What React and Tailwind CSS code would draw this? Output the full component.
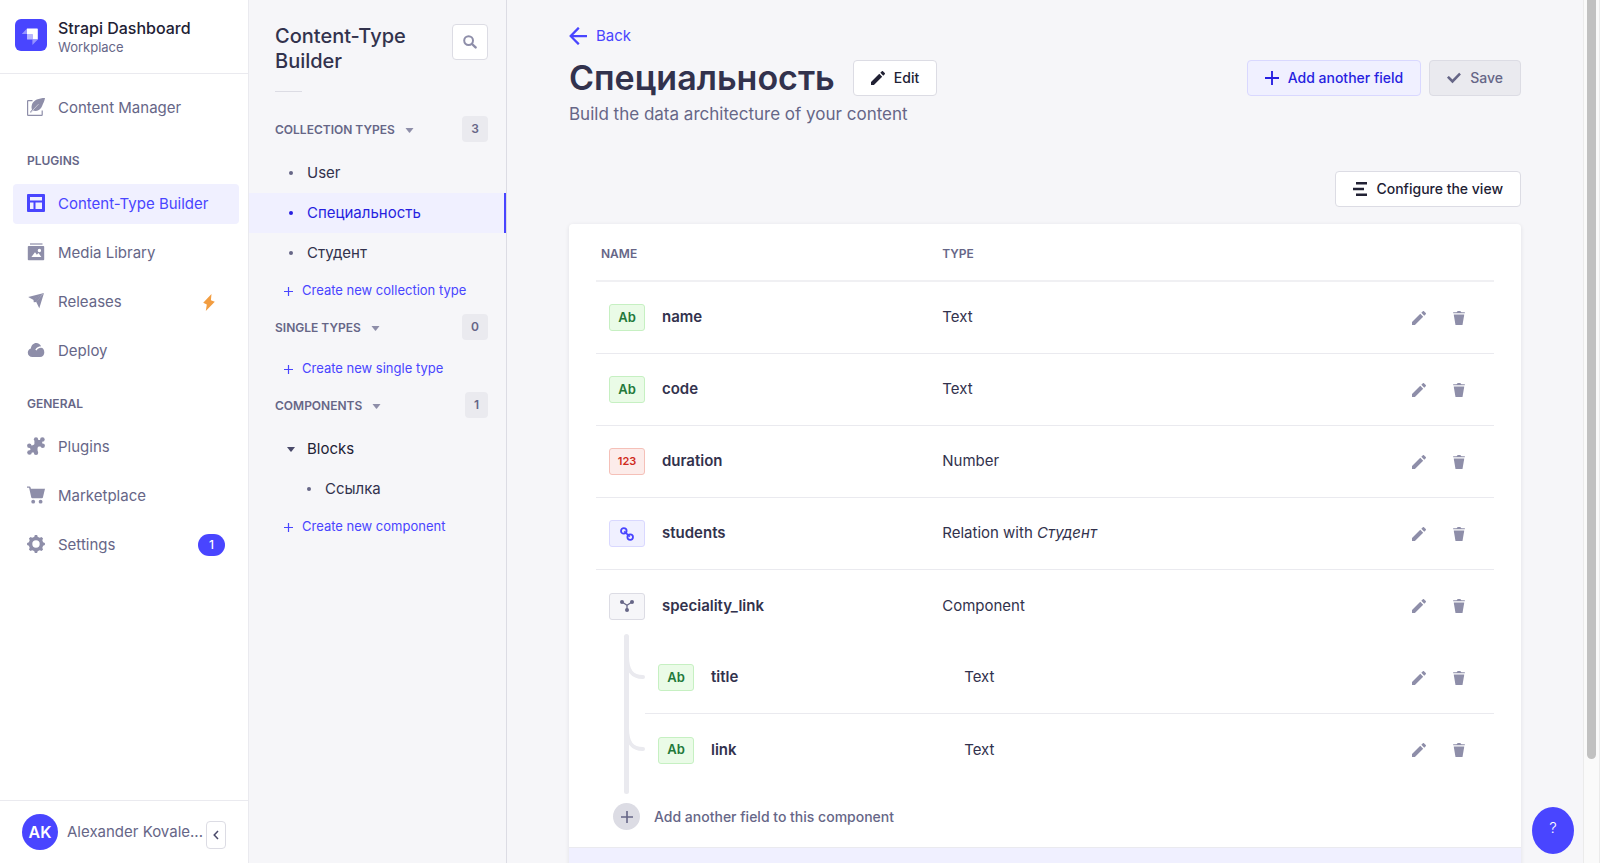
import React, { useState } from 'react';
import clsx from 'clsx';

const Icon = ({ className, viewBox = '0 0 24 24', children }) => (
    <svg className={clsx('shrink-0', className)} viewBox={viewBox} fill="currentColor" aria-hidden="true">
        {children}
    </svg>
);

const Plus = ({ className }) => (
    <Icon className={className}>
        <path d="M24 13.6H13.600V24h-3.200V13.600H0v-3.200h10.400V0h3.200v10.400H24z" />
    </Icon>
);

const Pencil = ({ className }) => (
    <Icon className={className}>
        <path d="M23.604 3.514c.528.528.528 1.36 0 1.887l-2.622 2.607-4.99-4.99L18.6.396a1.322 1.322 0 0 1 1.887 0l3.118 3.118ZM0 24v-4.99l14.2-14.2 4.99 4.99L4.99 24H0Z" />
    </Icon>
);

const Trash = ({ className }) => (
    <Icon className={className}>
        <path d="M3.236 6.149a.2.2 0 0 0-.197.233L6 24h12l2.96-17.618a.2.2 0 0 0-.196-.233H3.236ZM21.8 1.983c.11 0 .2.09.2.2v1.584a.2.2 0 0 1-.2.2H2.2a.2.2 0 0 1-.2-.2V2.183c0-.11.09-.2.2-.2h5.511c.9 0 1.631-1.09 1.631-1.983h5.316c0 .894.73 1.983 1.631 1.983H21.8Z" />
    </Icon>
);

const Check = ({ className }) => (
    <Icon className={className}>
        <path d="M20.727 2.97a.2.2 0 0 1 .286 0l2.85 2.89a.2.2 0 0 1 0 .28L9.554 20.854a.2.2 0 0 1-.285 0l-9.13-9.243a.2.2 0 0 1 0-.281l2.85-2.892a.2.2 0 0 1 .284 0l6.14 6.209L20.726 2.97Z" />
    </Icon>
);

const ArrowLeft = ({ className }) => (
    <Icon className={className}>
        <path d="M24 13.3a.2.2 0 0 1-.2.2H5.74l8.239 8.239a.2.2 0 0 1 0 .282L12.14 23.86a.2.2 0 0 1-.282 0L.14 12.14a.2.2 0 0 1 0-.282L11.86.14a.2.2 0 0 1 .282 0L13.98 1.98a.2.2 0 0 1 0 .282L5.74 10.5H23.8c.11 0 .2.09.2.2v2.6Z" />
    </Icon>
);

const Caret = ({ className }) => (
    <Icon className={className} viewBox="0 0 8 5">
        <path d="M0 0h8L4.5 4.6a.7.7 0 0 1-1 0z" />
    </Icon>
);

const Feather = ({ className }) => (
    <Icon className={className} viewBox="0 0 18 18">
        <path d="M5.5 2.6H1.2a.6.6 0 0 0-.6.6v13.6c0 .3.3.6.6.6h13.4c.3 0 .6-.3.6-.6v-4.2" fill="none" stroke="currentColor" strokeWidth="1.2" />
        <path d="M18 .1C12 .2 6.400 2 4.900 6.800c-.6 1.900-.4 3.600.1 4.800l-2 2.500.9.700 2.100-2.200c1.500.5 4 .6 5.800-.5 1.600-1 2.600-2.400 3.300-4.100 1.300-2.800 2.500-5.200 2.900-7.900z" />
        <path d="M4.300 13.800L11.500 6.200" fill="none" stroke="#fff" strokeWidth=".5" />
    </Icon>
);

const Layout = ({ className }) => (
    <Icon className={className} viewBox="0 0 18 18">
        <path fillRule="evenodd" d="M1 0h16a1 1 0 0 1 1 1v16a1 1 0 0 1-1 1H1a1 1 0 0 1-1-1V1a1 1 0 0 1 1-1zm2 3v3.500h12V3zm0 5.500V15h3.500V8.500zm5.500 0V15H15V8.500z" />
    </Icon>
);

const Media = ({ className }) => (
    <Icon className={className} viewBox="0 0 18 18">
        <path d="M3 .4h12.500v1.200H3z" />
        <path fillRule="evenodd" d="M1.600 3h14.800c.4 0 .8.4.8.800v12.700c0 .4-.4.800-.8.800H1.600a.8.8 0 0 1-.8-.8V3.800c0-.4.400-.8.800-.8zM4.400 14h10l-3-4-1.500 1.800L8 9.200zm8-8.200a1.700 1.700 0 1 0 0 3.400 1.700 1.700 0 0 0 0-3.400z" />
    </Icon>
);

const PaperPlane = ({ className }) => (
    <Icon className={className} viewBox="0 0 18 18">
        <path d="M17 1L1.200 4.900l5.400 3zM17 1l-4.700 15.200-3.200-6.400z" />
        <path d="M16.800 1L6.400 7.500l.4 2.800 2.500-.3z" />
    </Icon>
);

const Cloud = ({ className }) => (
    <Icon className={className} viewBox="0 0 18 18">
        <path d="M5.400 16C2.800 16 .8 14.200.8 11.700c0-2.200 1.300-3.900 3.100-4.300C4.300 4.300 6.500 2 9.200 2c2.300 0 4.100 1.300 4.900 3.300-2.600 0-4.800 1.400-5.800 3.500l1.300.7c.9-1.700 2.500-2.700 4.400-2.700 1.900 0 3.300 2 3.300 4.600 0 2.600-1.700 4.600-4.300 4.600z" />
    </Icon>
);

const Puzzle = ({ className }) => (
    <Icon className={className} viewBox="0 0 18 18">
        <path d="M3 8.500c1.800 0 4-.2 4.300-1.200.4-1-.3-3 .5-4.300L15 3l.5 6.200c-1.400.8-3.300-.3-4.500.8-1.100 1.100.2 3.600-.8 5.500H3l-.5-1.800c1.300-.6 1.300-2.400 0-3z" />
        <circle cx="9" cy="2.300" r="2.100" />
        <circle cx="15.400" cy="2.500" r="2.300" />
        <circle cx="15.700" cy="8.800" r="2.200" />
        <circle cx="9" cy="15.700" r="2.200" />
        <circle cx="2.500" cy="15.500" r="2.300" />
        <circle cx="2.300" cy="8.800" r="2.200" />
    </Icon>
);

const Cart = ({ className }) => (
    <Icon className={className} viewBox="0 0 18 18">
        <path d="M0 .4h2.600c.4 0 .7.2.8.600l.5 1.800h14.100l-2.100 8.700c-.1.500-.5.700-.9.700H5.300c-.5 0-.9-.3-1-.8L2.100 1.700H0z" />
        <circle cx="6.200" cy="15.700" r="1.900" />
        <circle cx="13.600" cy="15.700" r="1.900" />
    </Icon>
);

const Gear = ({ className }) => (
    <Icon className={className} viewBox="0 0 18 18">
        <circle cx="9" cy="9" r="5.500" fill="none" stroke="currentColor" strokeWidth="3.600" />
        {[0, 45, 90, 135, 180, 225, 270, 315].map(a => (
            <path key={a} d="M6.800 3L7.900.1h2.200L11.200 3z" transform={`rotate(${a} 9 9)`} />
        ))}
    </Icon>
);

const Bolt = ({ className }) => (
    <Icon className={className} viewBox="0 0 12 17">
        <path d="M8.500 0L.2 8.800l3.600 1.600L2.800 17l9-9.200-3.900-1.500z" />
    </Icon>
);

const Search = ({ className }) => (
    <Icon className={className} viewBox="0 0 14 14">
        <circle cx="5.600" cy="5.600" r="4.400" fill="none" stroke="currentColor" strokeWidth="2" />
        <path d="M9 9l3.600 3.400" stroke="currentColor" strokeWidth="2.400" strokeLinecap="round" />
    </Icon>
);

const Bars = ({ className }) => (
    <Icon className={className} viewBox="0 0 14 14">
        <path d="M3 0h11v2.600H3zM0 5.700h11v2.600H0zM3 11.400h11V14H3z" />
    </Icon>
);

const Chain = ({ className }) => (
    <Icon className={className} viewBox="0 0 14 14">
        <g fill="none" stroke="currentColor" strokeWidth="1.800">
            <circle cx="3.800" cy="3.900" r="2.800" />
            <circle cx="10.200" cy="10.100" r="2.800" />
            <path d="M4.200 4.400l5.600 5.200" />
        </g>
    </Icon>
);

const Fork = ({ className }) => (
    <Icon className={className} viewBox="0 0 14 12">
        <path d="M2 2l5 3.200L12 2M7 5v5" fill="none" stroke="currentColor" strokeWidth="1.300" />
        <circle cx="2" cy="2" r="2" />
        <circle cx="12" cy="2" r="2" />
        <circle cx="7" cy="10" r="2" />
    </Icon>
);

const StrapiLogo = () => (
    <svg className="size-8 shrink-0" viewBox="0 0 32 32" aria-hidden="true">
        <rect width="32" height="32" rx="6" fill="#4945ff" />
        <path d="M12 9.500h10.200a.6.6 0 0 1 .6.600v10.300h-5.400v-4.900a.5.500 0 0 0-.5-.5H12z" fill="#fff" />
        <path d="M12 9.500V15H6.800zM17.400 20.400h5.400L17.400 26z" fill="#9593ff" />
        <path d="M12 15h4.900c.3 0 .5.200.5.500v4.900h-4.900a.5.500 0 0 1-.5-.5z" fill="#b6b5ff" />
    </svg>
);

const pluginLinks = [
    { label: 'Content-Type Builder', icon: Layout, active: true },
    { label: 'Media Library', icon: Media },
    { label: 'Releases', icon: PaperPlane, bolt: true },
    { label: 'Deploy', icon: Cloud },
];

const generalLinks = [
    { label: 'Plugins', icon: Puzzle },
    { label: 'Marketplace', icon: Cart },
    { label: 'Settings', icon: Gear, count: 1 },
];

const fields = [
    { name: 'name', kind: 'text', type: 'Text' },
    { name: 'code', kind: 'text', type: 'Text' },
    { name: 'duration', kind: 'number', type: 'Number' },
    { name: 'students', kind: 'relation', type: 'Relation with', target: 'Студент' },
    {
        name: 'speciality_link',
        kind: 'component',
        type: 'Component',
        children: [
            { name: 'title', kind: 'text', type: 'Text' },
            { name: 'link', kind: 'text', type: 'Text' },
        ],
    },
];

function NavLink({ item }) {
    const ItemIcon = item.icon;
    return (
        <a
            href="#"
            className={clsx(
                'flex h-10 items-center gap-[13px] rounded px-3.5 text-[15px]',
                item.active ? 'bg-[#f0f0ff] text-[#4945ff]' : 'text-[#666687]'
            )}
        >
            <ItemIcon className={clsx('mb-0.5 size-[18px]', !item.active && 'text-[#8e8ea9]')} />
            <span className="grow">{item.label}</span>
            {item.bolt && <Bolt className="mr-2.5 h-[17px] w-3 text-[#f29d41]" />}
            {item.count && (
                <span className="flex h-[22px] w-[27px] items-center justify-center rounded-full bg-[#4945ff] text-xs font-medium text-white">
                    {item.count}
                </span>
            )}
        </a>
    );
}

function MainNav() {
    return (
        <nav className="flex w-[249px] shrink-0 flex-col border-r border-[#eaeaef] bg-white">
            <div className="flex h-[74px] items-center gap-[11px] border-b border-[#eaeaef] px-[15px] pb-1">
                <StrapiLogo />
                <div className="pt-1">
                    <div className="text-base leading-5 font-medium text-[#212134]">Strapi Dashboard</div>
                    <div className="text-[13px] leading-[18px] text-[#666687]">Workplace</div>
                </div>
            </div>
            <div className="grow pt-3.5 pr-[9px] pl-[13px]">
                <NavLink item={{ label: 'Content Manager', icon: Feather }} />
                <h2 className="mt-6 mb-3.5 px-3.5 text-xs leading-[18px] font-semibold text-[#666687]">PLUGINS</h2>
                <div className="flex flex-col gap-[9px]">
                    {pluginLinks.map(item => <NavLink key={item.label} item={item} />)}
                </div>
                <h2 className="mt-6 mb-3.5 px-3.5 text-xs leading-[18px] font-semibold text-[#666687]">GENERAL</h2>
                <div className="flex flex-col gap-[9px]">
                    {generalLinks.map(item => <NavLink key={item.label} item={item} />)}
                </div>
            </div>
            <div className="flex h-[63px] items-center border-t border-[#eaeaef] pr-[22px] pl-[22px]">
                <span className="flex size-9 shrink-0 items-center justify-center rounded-full bg-[#4945ff] text-base font-semibold text-white">
                    AK
                </span>
                <span className="ml-[9px] grow text-[15px] whitespace-nowrap text-[#666687]">Alexander Kovale...</span>
                <button
                    aria-label="Collapse the navbar"
                    className="mt-1.5 flex h-7 w-5 shrink-0 items-center justify-center rounded border border-[#dcdce4] bg-white text-[#4a4a6a]"
                >
                    <Icon className="h-2.5 w-1.5" viewBox="0 0 6 10">
                        <path d="M5 1L1.200 5 5 9" fill="none" stroke="currentColor" strokeWidth="1.500" />
                    </Icon>
                </button>
            </div>
        </nav>
    );
}

function GroupHeader({ title, count }) {
    return (
        <div className="flex h-[26px] items-center pr-[18px] pl-[26px]">
            <button className="flex items-center gap-2.5 pt-0.5 text-xs font-semibold text-[#666687]">
                {title}
                <Caret className="h-[5px] w-[9px] text-[#8e8ea9]" />
            </button>
            <span className="ml-auto flex h-[26px] items-center rounded bg-[#eaeaef] px-[9px] text-xs font-semibold text-[#666687]">
                {count}
            </span>
        </div>
    );
}

function TypeLink({ label, active, nested }) {
    return (
        <a
            href="#"
            className={clsx(
                'flex h-10 items-center gap-3.5 text-[15px]',
                nested ? 'pl-[58px]' : 'pl-10',
                active ? 'border-r-2 border-[#4945ff] bg-[#f0f0ff] text-[#271fe0]' : 'text-[#32324d]'
            )}
        >
            <span className={clsx('size-1 rounded-full', active ? 'bg-[#271fe0]' : 'bg-[#666687]')}></span>
            {label}
        </a>
    );
}

function CreateButton({ label }) {
    return (
        <button className="ml-[35px] flex h-9 items-center gap-[9px] text-[13px] text-[#4945ff]">
            <Plus className="size-[9px]" />
            {label}
        </button>
    );
}

function SubNav() {
    return (
        <aside className="w-[258px] shrink-0 border-r border-[#dcdce4]">
            <div className="flex items-start justify-between pt-6 pr-[18px] pl-[26px]">
                <h2 className="w-36 text-xl leading-[25px] font-medium text-[#32324d]">Content-Type Builder</h2>
                <button
                    aria-label="Search"
                    className="flex size-9 items-center justify-center rounded border border-[#dcdce4] bg-white text-[#8e8ea9]"
                >
                    <Search className="size-3.5" />
                </button>
            </div>
            <hr className="mt-[17px] mb-6 ml-[26px] w-[27px] border-[#dcdce4]" />

            <GroupHeader title="COLLECTION TYPES" count={3} />
            <div className="pt-[11px]">
                <TypeLink label="User" />
                <TypeLink label="Специальность" active />
                <TypeLink label="Студент" />
                <CreateButton label="Create new collection type" />
            </div>

            <div className="pt-[5px]">
                <GroupHeader title="SINGLE TYPES" count={0} />
            </div>
            <div className="pt-[11px]">
                <CreateButton label="Create new single type" />
            </div>

            <div className="pt-[5px]">
                <GroupHeader title="COMPONENTS" count={1} />
            </div>
            <div className="pt-[11px]">
                <button className="flex h-10 items-center gap-3 pl-[38px] text-[15px] text-[#212134]">
                    <Caret className="h-[5px] w-2 text-[#4a4a6a]" />
                    Blocks
                </button>
                <TypeLink label="Ссылка" nested />
                <CreateButton label="Create new component" />
            </div>
        </aside>
    );
}

const buttonStyles = {
    tertiary: 'border-[#dcdce4] bg-white text-[#212134]',
    secondary: 'border-[#d9d8ff] bg-[#f0f0ff] text-[#271fe0]',
    disabled: 'border-[#dcdce4] bg-[#eaeaef] text-[#666687]',
};

function Button({ variant = 'tertiary', icon: ButtonIcon, children }) {
    return (
        <button
            disabled={variant === 'disabled'}
            className={clsx(
                'flex h-9 items-center gap-[9px] rounded border px-[17px] text-sm font-medium whitespace-nowrap',
                buttonStyles[variant]
            )}
        >
            <ButtonIcon className="size-3.5" />
            {children}
        </button>
    );
}

function FieldBadge({ kind }) {
    const base = 'flex h-[27px] w-9 shrink-0 items-center justify-center rounded-[3px] border font-semibold';
    if (kind === 'number') {
        return <span className={clsx(base, 'border-[#f5c0b8] bg-[#fcecea] text-[11px] text-[#d02b20]')}>123</span>;
    }
    if (kind === 'relation') {
        return <span className={clsx(base, 'border-[#d9d8ff] bg-[#f0f0ff] text-[#4945ff]')}><Chain className="size-3.5" /></span>;
    }
    if (kind === 'component') {
        return <span className={clsx(base, 'border-[#dcdce4] bg-[#f6f6f9] text-[#666687]')}><Fork className="h-3 w-3.5" /></span>;
    }
    return <span className={clsx(base, 'border-[#c6f0c2] bg-[#eafbe7] text-[13px] text-[#23793a]')}>Ab</span>;
}

function FieldRow({ field, last, nested }) {
    const border = !last && 'border-b border-[#eaeaef]';
    return (
        <tr>
            <td className={clsx('h-18 p-0', nested ? 'w-[37%]' : 'w-[38%]', border)}>
                <div className="flex items-center gap-[17px] pl-[13px] text-[15px] font-semibold text-[#32324d]">
                    <FieldBadge kind={field.kind} />
                    {field.name}
                </div>
            </td>
            <td className={clsx('h-18 px-[5px] text-[15px] text-[#32324d]', border)}>
                {field.type} {field.target && <em>{field.target}</em>}
            </td>
            <td className={clsx('h-18 p-0', border)}>
                <div className="flex items-center justify-end gap-[26px] pr-7 text-[#8e8ea9]">
                    <button className="flex" aria-label={`Edit ${field.name}`}><Pencil className="size-3.5" /></button>
                    <button className="flex" aria-label={`Delete ${field.name}`}><Trash className="size-3.5" /></button>
                </div>
            </td>
        </tr>
    );
}

function ComponentFields({ items }) {
    return (
        <tr>
            <td colSpan={3} className="p-0">
                <div className="relative flex">
                    {/* trunk of the tree, runs past the nested rows on both sides */}
                    <div className="absolute -top-2 -bottom-2 left-7 w-[5px] rounded-full bg-[#eaeaef]"></div>
                    <div className="w-[49px] shrink-0 text-[#eaeaef]">
                        {items.map(item => (
                            <svg key={item.name} className="h-18 w-[49px]" viewBox="0 0 49 72" fill="none" aria-hidden="true">
                                <path d="M31 14C31 29 36 35 47 35" stroke="currentColor" strokeWidth="4" strokeLinecap="round" />
                            </svg>
                        ))}
                    </div>
                    <table className="grow border-separate border-spacing-0">
                        <tbody>
                            {items.map((item, i) => (
                                <FieldRow key={item.name} field={item} last={i === items.length - 1} nested />
                            ))}
                        </tbody>
                    </table>
                </div>
                <button className="mt-[17px] mb-[17px] flex items-center gap-3.5 pl-[17px] text-sm font-medium text-[#666687]">
                    <span className="flex size-[27px] items-center justify-center rounded-full bg-[#dcdce4]">
                        <Plus className="size-3" />
                    </span>
                    Add another field to this component
                </button>
            </td>
        </tr>
    );
}

function FieldsTable() {
    return (
        <div className="mt-[17px] rounded bg-white shadow-[0_1px_4px_rgba(33,33,52,0.1)]">
            <div className="px-[27px]">
                <table className="w-full border-separate border-spacing-0">
                    <thead>
                        <tr className="text-left text-xs text-[#666687]">
                            <th className="h-[58px] w-[38%] border-b-2 border-[#f0f0f3] px-[5px] pt-1 font-semibold">NAME</th>
                            <th className="h-[58px] border-b-2 border-[#f0f0f3] px-[5px] pt-1 font-semibold">TYPE</th>
                            <th className="h-[58px] border-b-2 border-[#f0f0f3]"></th>
                        </tr>
                    </thead>
                    <tbody>
                        {fields.map(field => (
                            <React.Fragment key={field.name}>
                                <FieldRow field={field} last={!!field.children} />
                                {field.children && <ComponentFields items={field.children} />}
                            </React.Fragment>
                        ))}
                    </tbody>
                </table>
            </div>
            <div className="h-14 rounded-b border-t border-[#eaeaef] bg-[#f0f0ff]"></div>
        </div>
    );
}

export default function App() {
    const [helpOpen, setHelpOpen] = useState(false);

    return (
        <div className="flex h-screen overflow-hidden bg-[#f6f6f9] font-['Inter',sans-serif]">
            <MainNav />
            <SubNav />
            <main className="min-w-0 grow overflow-hidden px-[62px] pt-6">
                <a href="#" className="flex h-6 w-fit items-center gap-[9px] text-[15px] text-[#4945ff]">
                    <ArrowLeft className="size-[18px]" />
                    Back
                </a>
                <div className="mt-2 flex items-center justify-between">
                    <div className="flex items-center gap-[18px]">
                        <h1 className="text-[34px] leading-[44px] font-semibold text-[#32324d]">Специальность</h1>
                        <Button icon={Pencil}>Edit</Button>
                    </div>
                    <div className="flex gap-2">
                        <Button variant="secondary" icon={Plus}>Add another field</Button>
                        <Button variant="disabled" icon={Check}>Save</Button>
                    </div>
                </div>
                <p className="mt-0.5 text-[17px] leading-6 text-[#666687]">Build the data architecture of your content</p>
                <div className="mt-[45px] flex justify-end">
                    <Button icon={Bars}>Configure the view</Button>
                </div>
                <FieldsTable />
            </main>
            <div className="w-[17px] shrink-0 border-x border-[#ebebeb] bg-[#fafafa] px-[3px]">
                <div className="h-[88%] rounded-b-full bg-[#c1c1c1]"></div>
            </div>

            <button
                aria-label="Help"
                aria-expanded={helpOpen}
                onClick={() => setHelpOpen(!helpOpen)}
                className="fixed right-[26px] bottom-[9px] h-[47px] w-[42px] rounded-[50%] bg-[#4945ff] pb-1 text-[15px] font-light text-white"
            >
                ?
            </button>
        </div>
    );
}
